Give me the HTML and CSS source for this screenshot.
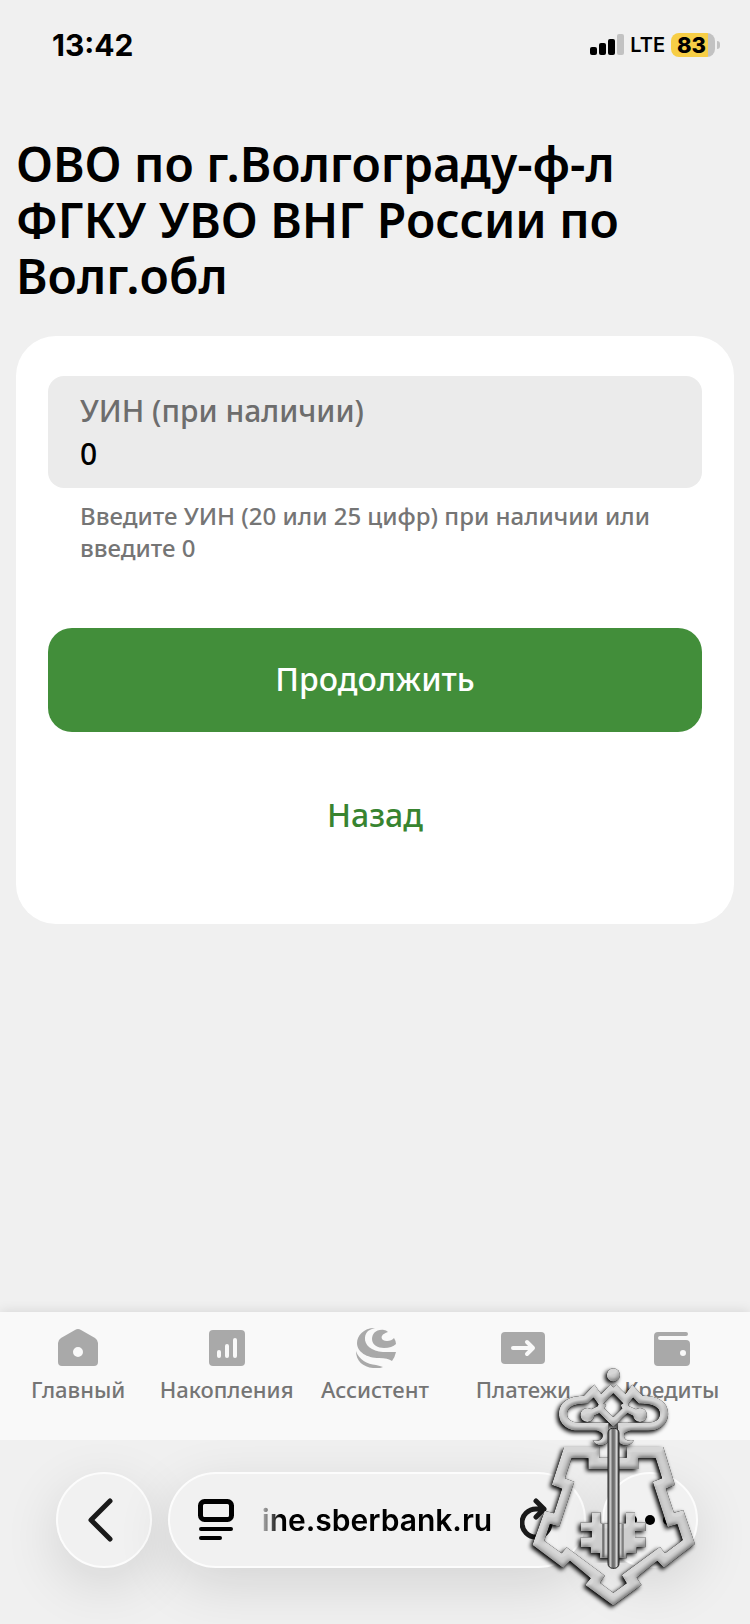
FILE: index.html
```html
<!DOCTYPE html>
<html lang="ru">
<head>
<meta charset="utf-8">
<meta name="viewport" content="width=device-width, initial-scale=1">
<title>Оплата</title>
<link rel="stylesheet" href="styles.css">
</head>
<body>
<header class="status">
  <span class="status-time">13:42</span>
  <div class="status-right">
    <svg class="signal" width="34" height="22" viewBox="0 0 34 22" aria-hidden="true">
      <rect x="0" y="13" width="7" height="8" rx="2"/>
      <rect x="9" y="9" width="7" height="12" rx="2"/>
      <rect x="18" y="5" width="7" height="16" rx="2"/>
      <rect x="27" y="0" width="7" height="21" rx="2" fill="#c2c2c2"/>
    </svg>
    <span class="status-net">LTE</span>
    <span class="battery"><span class="battery-body">83</span><span class="battery-cap"></span></span>
  </div>
</header>

<main class="page">
  <h1 class="title">ОВО по г.Волгограду-ф-л ФГКУ УВО ВНГ России по Волг.обл</h1>
  <form class="card">
    <div class="field">
      <label class="field-label" for="uin">УИН (при наличии)</label>
      <input class="field-input" id="uin" type="text" value="0" aria-describedby="uin-hint">
    </div>
    <p class="hint" id="uin-hint">Введите УИН (20 или 25 цифр) при наличии или введите 0</p>
    <button class="btn btn-primary" type="button">Продолжить</button>
    <button class="btn btn-text" type="button">Назад</button>
  </form>
</main>

<footer class="bottom">
  <nav class="tabs">
    <a class="tab" href="#main">
      <svg width="44" height="40" viewBox="0 0 44 40" aria-hidden="true"><path fill-rule="evenodd" d="M19 2Q22 0 25 2L39 10Q42 12 42 15V34Q42 38 38 38H6Q2 38 2 34V15Q2 12 5 10ZM22 19a5 5 0 1 0 0 10a5 5 0 1 0 0-10Z"/></svg>
      <span>Главный</span>
    </a>
    <a class="tab" href="#savings">
      <svg width="44" height="40" viewBox="0 0 44 40" aria-hidden="true"><rect x="4" y="2" width="36" height="36" rx="4"/><g fill="#f9f9f9"><rect x="12" y="22" width="4" height="8" rx="2"/><rect x="20" y="16" width="4" height="14" rx="2"/><rect x="28" y="10" width="4" height="20" rx="2"/></g></svg>
      <span>Накопления</span>
    </a>
    <a class="tab" href="#assistant">
      <svg width="44" height="40" viewBox="0 0 44 40" aria-hidden="true">
        <path d="M22 0C10 0 4 8 4 15C4 24 14 30 26 30Q35 30 39 33Q42 29 43 24C34 24 25 25 19 21C11 17 10 8 15 3Q18 1 22 0Z"/>
        <path d="M31 2C23 1 19 6 19 11C19 17 25 20 31 20Q39 20 43 16Q43 13 41 10C39 13 33 14 30 12C27 9 29 6 35 4Q33 2 31 2Z"/>
        <path d="M3 23C6 32 14 36 23 37Q27 38 30 39Q26 41 20 40C10 39 3 33 3 23Z"/>
      </svg>
      <span>Ассистент</span>
    </a>
    <a class="tab" href="#payments">
      <svg width="44" height="40" viewBox="0 0 44 40" aria-hidden="true"><rect x="0" y="4" width="44" height="32" rx="4"/><path d="M12 20H31M26 14L32 20L26 26" fill="none" stroke="#f9f9f9" stroke-width="4" stroke-linecap="round" stroke-linejoin="round"/></svg>
      <span>Платежи</span>
    </a>
    <a class="tab" href="#credits">
      <svg width="44" height="40" viewBox="0 0 44 40" aria-hidden="true"><path fill-rule="evenodd" d="M8 4H36a2 2 0 0 1 2 2a2 2 0 0 1-2 2H10a2 2 0 0 0 0 4H36Q40 12 40 16V34Q40 38 36 38H8Q4 38 4 34V8Q4 4 8 4ZM33 22a3 3 0 1 0 0 6a3 3 0 1 0 0-6Z"/></svg>
      <span>Кредиты</span>
    </a>
  </nav>

  <div class="browser">
    <button class="round" type="button" aria-label="Назад по истории">
      <svg width="32" height="44" viewBox="0 0 32 44" aria-hidden="true"><path d="M22 3L3 22L22 41" fill="none" stroke="#1a1a1a" stroke-width="5" stroke-linecap="round" stroke-linejoin="round"/></svg>
    </button>
    <div class="address">
      <button class="plain" type="button" aria-label="Меню страницы">
        <svg width="36" height="42" viewBox="0 0 36 42" aria-hidden="true"><rect x="2.5" y="2.5" width="31" height="18" rx="4" fill="none" stroke="#000" stroke-width="5"/><path d="M3 30H33M3 39H22" stroke="#000" stroke-width="4" stroke-linecap="round"/></svg>
      </button>
      <span class="url">ine.sberbank.ru</span>
      <button class="plain" type="button" aria-label="Обновить">
        <svg width="34" height="44" viewBox="0 0 34 44" aria-hidden="true"><path d="M24 11H16A14 14 0 1 0 30 25M16 3L24 11L16 19" fill="none" stroke="#1a1a1a" stroke-width="5" stroke-linecap="round" stroke-linejoin="round"/></svg>
      </button>
    </div>
    <button class="round" type="button" aria-label="Ещё">
      <svg width="48" height="12" viewBox="0 0 48 12" aria-hidden="true"><circle cx="6" cy="6" r="5"/><circle cx="24" cy="6" r="5"/><circle cx="42" cy="6" r="5"/></svg>
    </button>
  </div>

  <svg class="emblem" width="190" height="260" viewBox="0 0 570 780" aria-hidden="true">
    <defs>
      <filter id="metal" x="-10%" y="-10%" width="120%" height="120%" color-interpolation-filters="sRGB">
        <feGaussianBlur in="SourceAlpha" stdDeviation="6" result="soft"/>
        <feDiffuseLighting in="soft" surfaceScale="5" diffuseConstant="1.15" lighting-color="#ffffff" result="light">
          <feDistantLight azimuth="250" elevation="55"/>
        </feDiffuseLighting>
        <feComposite in="SourceGraphic" in2="light" operator="arithmetic" k1="0.8" k2="0.24" k3="0" k4="0" result="lit"/>
        <feComposite in="lit" in2="SourceAlpha" operator="in" result="body"/>
        <feMorphology in="SourceAlpha" operator="dilate" radius="1.2" result="edge"/>
        <feOffset in="SourceAlpha" dx="-6" dy="5" result="off"/>
        <feGaussianBlur in="off" stdDeviation="6" result="shade"/>
        <feComponentTransfer in="shade" result="shadow"><feFuncA type="linear" slope="1"/></feComponentTransfer>
        <feComponentTransfer in="edge" result="outline"><feFuncA type="linear" slope="0.7"/></feComponentTransfer>
        <feMerge><feMergeNode in="shadow"/><feMergeNode in="outline"/><feMergeNode in="body"/></feMerge>
      </filter>
      <linearGradient id="shaft" x1="0" x2="1" y1="0" y2="0">
        <stop offset="0" stop-color="#555"/><stop offset=".22" stop-color="#c8c8c8"/><stop offset=".42" stop-color="#6a6a6a"/>
        <stop offset=".58" stop-color="#777"/><stop offset=".78" stop-color="#d6d6d6"/><stop offset="1" stop-color="#3a3a3a"/>
      </linearGradient>
    </defs>
    <g filter="url(#metal)" fill="#cfcfcf">
      <path fill-rule="evenodd" d="M132 261H238V293H320V261H430L465 375L438 386L462 458L490 450L525 552L432 624L412 603L350 653L365 675L280 737L195 675L212 655L150 603L130 625L37 555L74 452L102 460L126 386L95 375ZM155 295L135 355L163 365L118 500L90 492L73 542L125 580L140 562L255 647L240 668L280 698L320 670L305 645L420 560L435 580L488 540L472 493L443 502L398 365L426 355L407 295H355V327H205V295Z"/>
    </g>
    <g filter="url(#metal)" fill="#cfcfcf">
      <path d="M264 490H242V457H215V487H182V513H215V532H182V562H212V580H240V595H320V580H350V562H377V532H345V513H377V487H345V457H318V490Z"/>
    </g>
    <g stroke-width="7" opacity=".75"><path d="M250 492V592" stroke="#555"/><path d="M308 492V592" stroke="#666"/></g>
    <g filter="url(#metal)" fill="#cfcfcf" stroke="#cfcfcf">
      <path d="M280 82L318 121L338 93L362 119C410 120 432 136 432 162C432 188 408 200 385 200H325M280 82L242 121L222 93L198 119C150 120 129 136 129 162C129 188 152 200 175 200H240" fill="none" stroke-width="25"/>
      <path d="M202 165L240 147L280 186L320 147L360 165M240 147L250 130M320 147L310 130" fill="none" stroke-width="21"/>
      <g stroke="none">
        <circle cx="202" cy="165" r="21"/><circle cx="360" cy="165" r="21"/>
        <path d="M232 188H266V240C262 260 226 262 218 240C236 248 254 236 246 220L230 211Z"/>
        <path d="M330 188H294V240C298 260 334 262 342 240C324 248 306 236 314 220L332 211Z"/>
        <circle cx="280" cy="45" r="20"/>
      </g>
    </g>
    <rect x="264" y="205" width="33" height="420" rx="14" fill="url(#shaft)" stroke="#222" stroke-width="3"/>
  </svg>
</footer>
</body>
</html>
```
FILE: styles.css
```css
* {
  box-sizing: border-box;
}

body {
  margin: 0;
  min-height: 100vh;
  display: flex;
  flex-direction: column;
  background: #f0f0f0;
  color: #000;
  font-family: "Noto Sans", "Open Sans", sans-serif;
  font-weight: 500;
}

button {
  border: 0;
  padding: 0;
  background: none;
  font: inherit;
}

svg {
  display: block;
  flex: none;
}

.status {
  display: flex;
  align-items: center;
  justify-content: space-between;
  height: 90px;
  padding: 0 30px 0 52px;
  font-family: Inter, sans-serif;
}

.status-time {
  font-size: 30px;
  font-weight: 700;
}

.status-right {
  display: flex;
  align-items: center;
  gap: 6px;
}

.status-net {
  font-size: 20px;
  font-weight: 600;
}

.battery {
  display: flex;
  align-items: center;
  gap: 2px;
}

.battery-body {
  width: 44px;
  height: 24px;
  border-radius: 8px;
  background: linear-gradient(90deg, #f7ce46 84%, #c2c2c2 84%);
  font-size: 22px;
  font-weight: 800;
  line-height: 24px;
  padding-left: 6px;
}

.battery-cap {
  width: 3px;
  height: 8px;
  border-radius: 0 4px 4px 0;
  background: #c2c2c2;
}

.page {
  flex: 1;
  padding: 46px 16px 64px;
}

.title {
  margin: 0 0 32px;
  font-size: 48px;
  font-weight: 600;
  line-height: 56px;
}

.card {
  display: flex;
  flex-direction: column;
  padding: 40px 32px;
  border-radius: 40px;
  background: #fff;
}

.field {
  display: flex;
  flex-direction: column;
  height: 112px;
  padding: 14px 32px;
  border-radius: 16px;
  background: #ebebeb;
}

.field-label {
  color: #6d6d6d;
  font-size: 30px;
  line-height: 42px;
}

.field-input {
  width: 100%;
  height: 42px;
  padding: 0;
  border: 0;
  outline: 0;
  background: transparent;
  font: inherit;
  font-size: 30px;
}

.hint {
  margin: 12px 32px 64px;
  color: #757575;
  font-size: 24px;
  line-height: 32px;
}

.btn {
  height: 104px;
  padding-bottom: 4px;
  border-radius: 24px;
  font-size: 32px;
}

.btn-primary {
  margin-bottom: 32px;
  background: #428e3a;
  color: #fff;
}

.btn-text {
  margin-bottom: 16px;
  color: #388430;
}

.bottom {
  position: relative;
}

.tabs {
  display: grid;
  grid-template-columns: repeat(5, 1fr);
  height: 128px;
  padding: 16px 4px 0;
  background: #f9f9f9;
  box-shadow: 0 0 12px rgba(0, 0, 0, 0.12);
}

.tab {
  display: flex;
  flex-direction: column;
  align-items: center;
  gap: 5px;
  color: #757575;
  fill: #a9a9a9;
  font-size: 22px;
  line-height: 32px;
  text-decoration: none;
}

.browser {
  position: relative;
  display: flex;
  gap: 16px;
  height: 184px;
  padding: 32px 52px 0 56px;
  overflow: hidden;
  background: #f0f0f0;
}

.round,
.address {
  display: flex;
  align-items: center;
  height: 96px;
  border: 2px solid #fcfcfc;
  border-radius: 48px;
  background: #f1f1f1;
  box-shadow: 0 16px 56px rgba(0, 0, 0, 0.12);
}

.round {
  flex: none;
  justify-content: center;
  width: 96px;
}

.address {
  flex: 1;
  justify-content: space-between;
  padding: 0 30px 0 28px;
}

.url {
  font-family: Inter, sans-serif;
  font-size: 30px;
  font-weight: 600;
  background: linear-gradient(90deg, #b5b5b5, #000 18px);
  background-clip: text;
  -webkit-background-clip: text;
  color: transparent;
}

.emblem {
  position: absolute;
  right: 40px;
  bottom: 4px;
  pointer-events: none;
}
```
